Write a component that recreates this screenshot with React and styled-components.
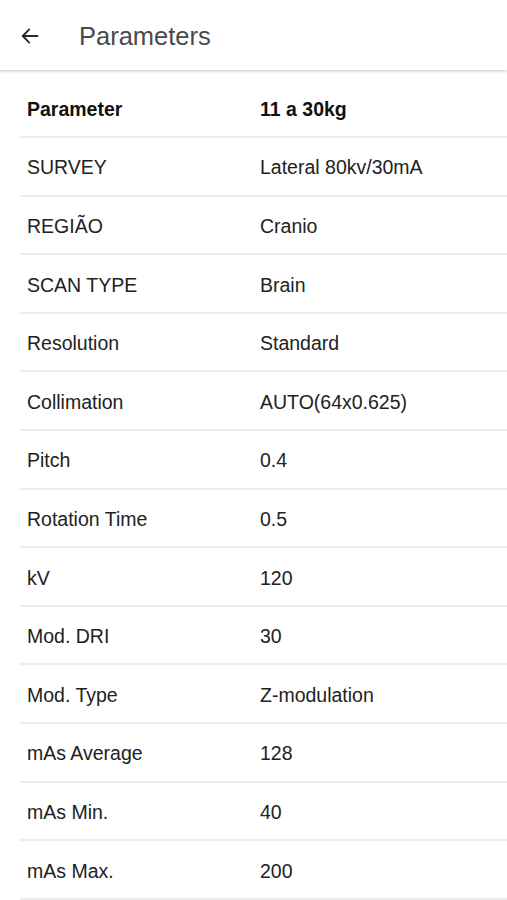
import React from "react";
import styled, { createGlobalStyle } from "styled-components";

const Global = createGlobalStyle`
  html, body { margin: 0; padding: 0; background: #fff; }
  body { font-family: "Liberation Sans", Arial, sans-serif; }
  * { box-sizing: border-box; }
`;

const Page = styled.div`
  width: 507px;
  min-height: 900px;
  background: #fff;
  overflow: hidden;
`;

const Header = styled.header`
  height: 70px;
  display: flex;
  align-items: center;
  padding-left: 21px;
  padding-top: 2px;
  background: #fff;
  box-shadow: 0 1px 3px rgba(0, 0, 0, 0.16), 0 2px 2px rgba(0, 0, 0, 0.06);
  position: relative;
  z-index: 1;
`;

const BackButton = styled.button`
  width: 18px;
  height: 18px;
  padding: 0;
  border: 0;
  background: transparent;
  display: flex;
  align-items: center;
  justify-content: center;
  color: #2a2a2a;
  margin-right: 40px;
`;

const Title = styled.h1`
  margin: 0;
  font-size: 25.5px;
  font-weight: 400;
  color: #4a4a4a;
`;

const Table = styled.div`
  margin-left: 20px;
  padding-top: 9.5px;
`;

const Row = styled.div`
  display: grid;
  grid-template-columns: 233px 1fr;
  align-items: center;
  height: 58.6px;
  padding-left: 7px;
  padding-top: 3px;
  border-bottom: 2px solid #ececec;
  font-size: 19.5px;
  color: ${(p) => (p.$head ? "#111" : "#222")};
  font-weight: ${(p) => (p.$head ? 700 : 400)};
`;

const Cell = styled.span`
  white-space: nowrap;
`;

const rows = [
  ["SURVEY", "Lateral 80kv/30mA"],
  ["REGIÃO", "Cranio"],
  ["SCAN TYPE", "Brain"],
  ["Resolution", "Standard"],
  ["Collimation", "AUTO(64x0.625)"],
  ["Pitch", "0.4"],
  ["Rotation Time", "0.5"],
  ["kV", "120"],
  ["Mod. DRI", "30"],
  ["Mod. Type", "Z-modulation"],
  ["mAs Average", "128"],
  ["mAs Min.", "40"],
  ["mAs Max.", "200"],
];

export default function App() {
  return (
    <Page>
      <Global />
      <Header>
        <BackButton aria-label="Back">
          <svg width="18" height="18" viewBox="0 0 18 18" fill="none" stroke="currentColor" strokeWidth="1.9" strokeLinecap="round" strokeLinejoin="round">
            <path d="M16.5 9H1.8" />
            <path d="M8.2 2.4L1.8 9l6.4 6.6" />
          </svg>
        </BackButton>
        <Title>Parameters</Title>
      </Header>
      <Table>
        <Row $head>
          <Cell>Parameter</Cell>
          <Cell>11 a 30kg</Cell>
        </Row>
        {rows.map(([k, v]) => (
          <Row key={k}>
            <Cell>{k}</Cell>
            <Cell>{v}</Cell>
          </Row>
        ))}
      </Table>
    </Page>
  );
}
